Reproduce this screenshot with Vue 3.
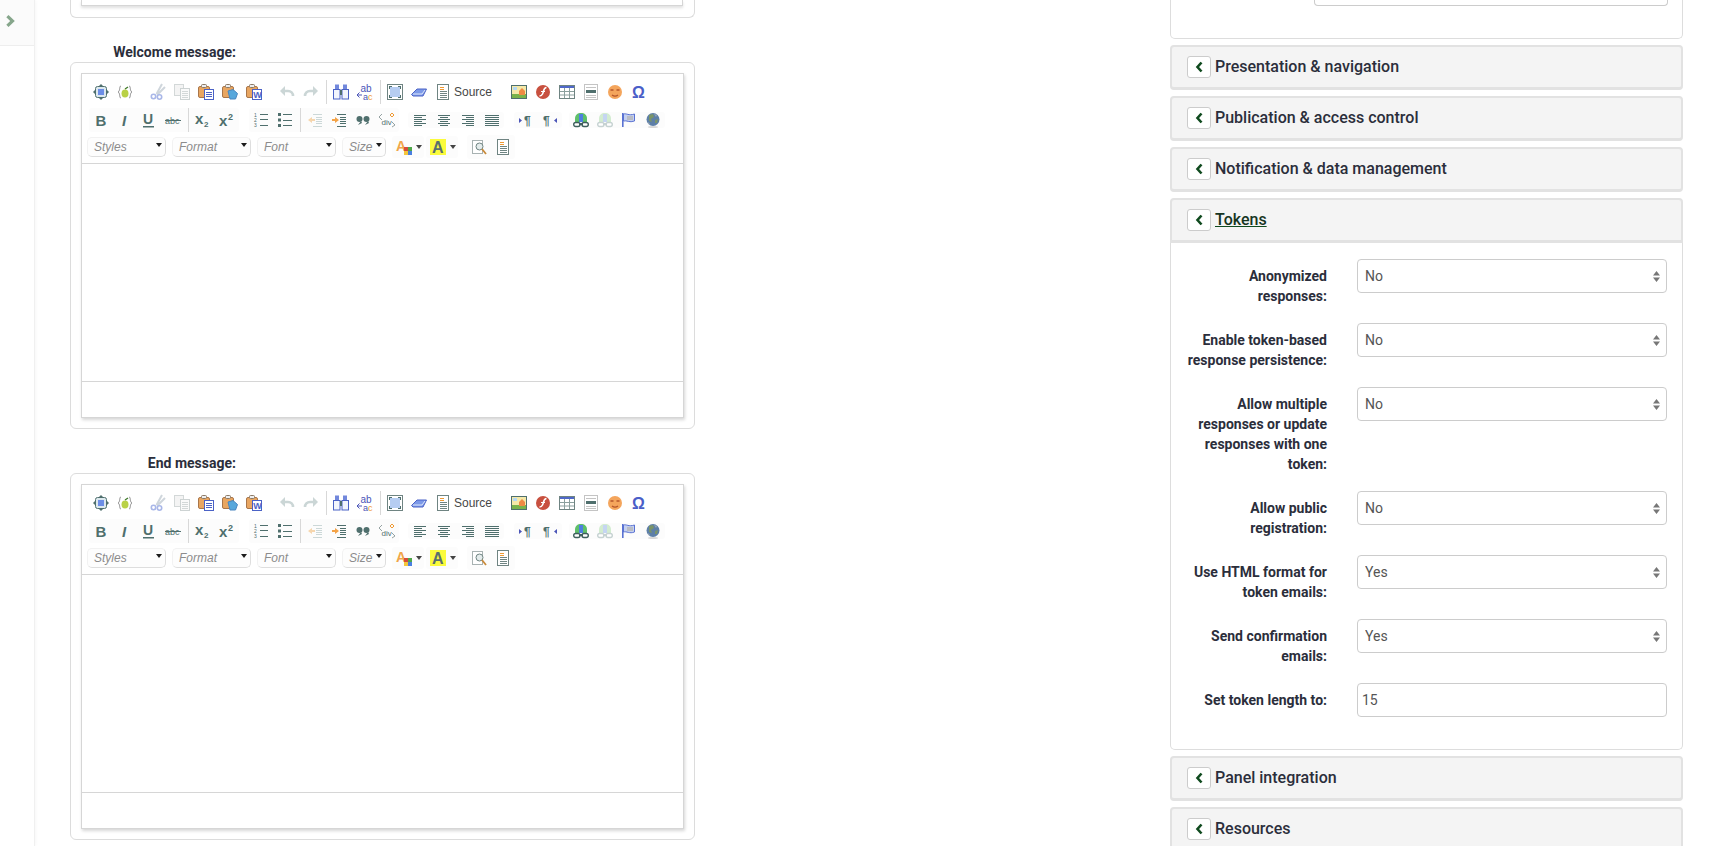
<template>
  <div class="page">
    <!-- SIDE BAR -->
    <aside class="sidebar">
      <div class="side-top">
        <svg class="side-arrow" viewBox="0 0 9 12"><path d="M2.500 0 8.800 6 2.500 12 0.300 9.800 4.200 6 0.300 2.200z" fill="#86a68b" /></svg>
      </div>
    </aside>

    <!-- LEFT COLUMN : EDITORS -->
    <main class="left-col">
      <div class="stub-card"><div class="stub-inner"></div></div>

      <section v-for="msg in messages" :key="msg">
        <label class="msg-label">{{ msg }}</label>
        <div class="editor-card">
          <div class="editor">
            <div class="toolbar">
              <div class="tb-row row-one">
                <div v-for="(group, g) in rowOne" :key="g" class="tb-group">
                  <template v-for="(item, n) in group" :key="n">
                    <span v-if="item === '|'" class="tb-sep"></span>
                    <span v-else-if="item === 'Source'" class="tb-source">Source</span>
                    <svg v-else class="tb-icon" viewBox="0 0 16 16" v-html="icons[item]"></svg>
                  </template>
                </div>
              </div>
              <div class="tb-row row-two">
                <div v-for="(group, g) in rowTwo" :key="g" class="tb-group shaded">
                  <template v-for="(item, n) in group" :key="n">
                    <span v-if="item === '|'" class="tb-sep"></span>
                    <svg v-else class="tb-icon" viewBox="0 0 16 16" v-html="icons[item]"></svg>
                  </template>
                </div>
              </div>
              <div class="tb-row row-three">
                <div v-for="c in combos" :key="c" class="combo" :class="{ short: c === 'Size' }">
                  <span>{{ c }}</span><i class="caret"></i>
                </div>
                <div class="color-btn shaded">
                  <svg class="tb-icon" viewBox="0 0 16 16" v-html="icons.textColor"></svg><i class="caret"></i>
                </div>
                <div class="color-btn shaded">
                  <svg class="tb-icon" viewBox="0 0 16 16" v-html="icons.bgColor"></svg><i class="caret"></i>
                </div>
                <div class="tb-group shaded tail">
                  <svg class="tb-icon" viewBox="0 0 16 16" v-html="icons.inspect"></svg>
                  <svg class="tb-icon" viewBox="0 0 16 16" v-html="icons.doc"></svg>
                </div>
              </div>
            </div>
            <div class="edit-area"></div>
            <div class="edit-foot"></div>
          </div>
        </div>
      </section>
    </main>

    <!-- RIGHT COLUMN : SETTINGS -->
    <div class="right-col">
      <div class="stub-panel"><div class="stub-input"></div></div>

      <div v-for="p in panels" :key="p" class="panel">
        <div class="panel-head" :class="{ open: p === 'Tokens' }">
          <span class="back-btn">
            <svg viewBox="0 0 8 12" width="8" height="12"><path d="M6.500 1.500 2.500 6l4 4.500" fill="none" stroke="#0f4a1e" stroke-width="2.600" /></svg>
          </span>
          <span class="panel-title">{{ p }}</span>
        </div>
        <div v-if="p === 'Tokens'" class="panel-body">
          <div v-for="f in fields" :key="f.label" class="field">
            <label class="field-label">{{ f.label }}</label>
            <div class="control">
              <input v-if="f.input" class="text-input" type="text" :value="f.value" />
              <template v-else>
                <select class="select"><option>{{ f.value }}</option></select>
                <svg class="updown" viewBox="0 0 7 11" width="7" height="11"><path d="M3.500 0 7 4.500H0zM3.500 11 0 6.500h7z" fill="#777" /></svg>
              </template>
            </div>
          </div>
        </div>
      </div>
    </div>
  </div>
</template>

<script setup>
const messages = ['Welcome message:', 'End message:']

const rowOne = [
  ['preview', 'template'],
  ['cut', 'copy', 'paste', 'pasteText', 'pasteWord'],
  ['undo', 'redo', '|', 'find', 'replace', '|', 'maximize', 'eraser', 'doc', 'Source'],
  ['image', 'flash', 'table', 'rule', 'smiley', 'omega']
]
const rowTwo = [
  ['bold', 'italic', 'underline', 'strike', '|', 'sub', 'sup'],
  ['ol', 'ul', '|', 'outdent', 'indent', 'quote', 'div'],
  ['left', 'center', 'right', 'justify'],
  ['ltr', 'rtl'],
  ['link', 'unlink', 'anchor', 'globe']
]
const combos = ['Styles', 'Format', 'Font', 'Size']

/* PANELS */
const panels = ['Presentation & navigation', 'Publication & access control', 'Notification & data management', 'Tokens', 'Panel integration', 'Resources']
const fields = [
  { label: 'Anonymized responses:', value: 'No' },
  { label: 'Enable token-based response persistence:', value: 'No' },
  { label: 'Allow multiple responses or update responses with one token:', value: 'No' },
  { label: 'Allow public registration:', value: 'No' },
  { label: 'Use HTML format for token emails:', value: 'Yes' },
  { label: 'Send confirmation emails:', value: 'Yes' },
  { label: 'Set token length to:', value: '15', input: true }
]

/* ICONS */
const TEAL = '#4f6f6d'
const lines = (rows, color = TEAL) =>
  rows.map(([x, y, w]) => `<rect x="${x}" y="${y}" width="${w}" height="1" fill="${color}"/>`).join('')
const label = (txt, x, y, size, fill, extra = '') =>
  `<text x="${x}" y="${y}" font-family="Liberation Sans, sans-serif" font-size="${size}" fill="${fill}" ${extra}>${txt}</text>`
const clipboard = inner =>
  `<rect x="0.500" y="2.500" width="11" height="11" rx="1.500" fill="#e9a661" stroke="#a9764a"/><rect x="3.500" y="0.500" width="5" height="3" rx="1" fill="#eee" stroke="#8c7a66"/>${inner}`
const car = (dome, glass, wheel) =>
  `<path d="M2 10V6.500C2 3 4.500 1 8 1s6 2 6 5.500V10z" fill="${dome}"/><path d="M6 2h4v8H6z" fill="${glass}"/><rect x="0.700" y="10.500" width="6.300" height="4" rx="2" fill="#fff" stroke="${wheel}" stroke-width="1.400"/><rect x="9" y="10.500" width="6.300" height="4" rx="2" fill="#fff" stroke="${wheel}" stroke-width="1.400"/><rect x="6" y="11" width="4" height="2" fill="${wheel}"/>`

const icons = {
  preview: `<rect x="2.500" y="2.500" width="11" height="11" rx="2" fill="#dce8ee" stroke="${TEAL}"/><rect x="5" y="5" width="6" height="6" fill="#6d8ee6"/><path d="M8 0l2 2H6zM8 16l2-2H6zM0 8l2-2v4zM16 8l-2-2v4z" fill="${TEAL}"/>`,
  template: `<path d="M4 2C2 2 3.500 7 1 8c2.500 1 1 6 3 6M12 2c2 0 .5 5 3 6-2.500 1-1 6-3 6" stroke="#8a8a8a" fill="none"/><ellipse cx="8" cy="9.500" rx="3.500" ry="4" fill="#b9d146"/><path d="M8 5l3-2" stroke="#3f7a2a" stroke-width="1.300"/>`,
  cut: `<path d="M12 0 6.500 10M15 3 7 11" stroke="#cfd6dc" stroke-width="2"/><circle cx="3.500" cy="12.500" r="2.200" fill="none" stroke="#a9b7e8" stroke-width="1.600"/><circle cx="9.500" cy="13" r="2.200" fill="none" stroke="#a9b7e8" stroke-width="1.600"/>`,
  copy: `<rect x="0.500" y="0.500" width="9" height="11" fill="#f4f4f4" stroke="#d3d8d8"/><rect x="6.500" y="4.500" width="9" height="11" fill="#fafafa" stroke="#cdd3d3"/>${lines([[8, 7, 6], [8, 9, 6], [8, 11, 6], [8, 13, 6]], '#d3d8d8')}`,
  paste: clipboard(`<rect x="6.500" y="5.500" width="9" height="10" fill="#fff" stroke="#4b62c6"/>${lines([[8, 8, 6], [8, 10, 6], [8, 12, 6]], '#4b62c6')}`),
  pasteText: clipboard(`<path d="M6 7l5-1.500 4.500 4-2 5.500H8z" fill="#58a8dc" stroke="#4a86c0"/>`),
  pasteWord: clipboard(`<rect x="6.500" y="5.500" width="9" height="10" fill="#fff" stroke="#4b62c6"/>${label('W', 7.2, 14, 9, '#4b62c6', 'font-weight="700"')}`),
  undo: `<path d="M3 7h6c3 0 5 2 5 5" fill="none" stroke="#cbd6d6" stroke-width="2.600"/><path d="M1 7l5-5v10z" fill="#cbd6d6"/>`,
  redo: `<path d="M13 7H7c-3 0-5 2-5 5" fill="none" stroke="#cbd6d6" stroke-width="2.600"/><path d="M15 7l-5-5v10z" fill="#cbd6d6"/>`,
  find: `<rect x="2" y="0.500" width="4" height="5" fill="#7288dc"/><rect x="10" y="0.500" width="4" height="5" fill="#7288dc"/><rect x="0.500" y="5.500" width="6.500" height="9.500" fill="#f2f5fd" stroke="#4b62c6"/><rect x="9" y="5.500" width="6.500" height="9.500" fill="#f2f5fd" stroke="#4b62c6"/><rect x="7" y="6" width="2" height="5" fill="${TEAL}"/>`,
  replace: `${label('ab', 3.500, 8, 10, '#4b55b8')}<path d="M0 11h5M2.500 8.500 0 11l2.500 2.500" fill="none" stroke="#4b55b8"/>${label('a', 6, 15.500, 9, '#4b55b8')}${label('c', 11, 15.500, 9, '#ef9a34')}`,
  maximize: `<rect x="0.500" y="0.500" width="15" height="15" fill="#fff" stroke="#6f8482"/><rect x="3" y="3" width="10" height="10" fill="#b6cdf2"/><path d="M2 2h3v1H3v2H2zM14 2v3h-1V3h-2V2zM2 14v-3h1v2h2v1zM14 14h-3v-1h2v-2h1z" fill="${TEAL}"/>`,
  eraser: `<path d="M0.500 10.500 6 5h9.500L12 12H2z" fill="#7d9ae8" stroke="#4b62c6"/><path d="M2 10h9l3-4" fill="none" stroke="#dfe7fa"/>`,
  doc: `<rect x="2.500" y="0.500" width="11" height="15" fill="#fff" stroke="#6f8482"/>${lines([[5, 3, 4], [5, 5, 4]], '#ef9a34')}${lines([[5, 7, 7], [5, 9, 7], [5, 11, 7], [5, 13, 7]], '#6f8482')}`,
  image: `<rect x="0.500" y="1.500" width="15" height="13" fill="#f5e9a8" stroke="${TEAL}"/><rect x="1" y="10" width="14" height="4" fill="#79b34a"/><path d="M8 7l3-3 3 3v4H8z" fill="#ef8a44"/><rect x="2" y="3" width="4" height="3" fill="#b4d8f2"/>`,
  flash: `<circle cx="8" cy="8" r="7" fill="#c8503f"/><path d="M11.500 3.500C8.500 3.500 9 7 7.500 10c-.6 1.300-1.500 2-3 2" fill="none" stroke="#fff" stroke-width="1.600"/><path d="M6 7.500h4" stroke="#fff"/>`,
  table: `<rect x="0.500" y="1.500" width="15" height="13" fill="#fff" stroke="#6f8482"/><rect x="1" y="2" width="14" height="2" fill="#4f68c8"/><path d="M1 7.500h14M1 11h14M5.500 4v10M10.500 4v10" stroke="#8ba09e"/>`,
  rule: `<rect x="1.500" y="0.500" width="13" height="15" fill="#fff" stroke="#c4c4c4"/><rect x="3" y="6" width="10" height="3" fill="${TEAL}"/>${lines([[3, 3, 10], [3, 11, 10], [3, 13, 10]], '#c4c4c4')}`,
  smiley: `<circle cx="8" cy="8" r="7" fill="#f4a55c"/><path d="M3.500 6h3M9.500 6h3" stroke="#b5562a" stroke-width="1.300"/><path d="M5 11c2 1.600 4 1.600 6 0" fill="none" stroke="#b5562a" stroke-width="1.300"/>`,
  omega: label('Ω', 1, 14, 16, '#4a5ec8', 'font-weight="700"'),
  bold: label('B', 2.500, 14, 15, TEAL, 'font-weight="700"'),
  italic: label('I', 5, 14, 15, TEAL, 'font-weight="700" font-style="italic"'),
  underline: `${label('U', 2, 12, 14, TEAL, 'font-weight="700"')}<rect x="2" y="14" width="11" height="1.500" fill="${TEAL}"/>`,
  strike: `${label('abc', 0, 12, 9, TEAL)}<rect x="0" y="8" width="16" height="1" fill="${TEAL}"/>`,
  sub: `${label('x', 0, 12, 15, TEAL, 'font-weight="700"')}${label('2', 9, 15, 8, TEAL, 'font-weight="700"')}`,
  sup: `${label('x', 0, 14, 15, TEAL, 'font-weight="700"')}${label('2', 9, 8, 9, TEAL, 'font-weight="700"')}`,
  ol: `${label('1', 1, 5, 5, TEAL)}${label('2', 1, 10, 5, TEAL)}${label('3', 1, 15, 5, TEAL)}${lines([[7, 2, 8], [7, 7, 8], [7, 13, 8]])}`,
  ul: `<rect x="1" y="1" width="3" height="3" fill="${TEAL}"/><rect x="1" y="6.500" width="3" height="3" fill="${TEAL}"/><rect x="1" y="12" width="3" height="3" fill="${TEAL}"/>${lines([[6, 2, 9], [6, 8, 9], [6, 13, 9]])}`,
  outdent: `<path d="M1 8l4-3v2h3v2H5v2z" fill="#f6d6ae"/>${lines([[6, 2, 9], [9, 5, 6], [9, 7, 6], [9, 9, 6], [9, 11, 6], [6, 14, 9]], '#ccd8d8')}`,
  indent: `<path d="M8 8 4 5v2H1v2h3v2z" fill="#f4a347"/>${lines([[6, 2, 9], [9, 5, 6], [9, 7, 6], [9, 9, 6], [9, 11, 6], [6, 14, 9]])}`,
  quote: `<circle cx="4.500" cy="7" r="3" fill="${TEAL}"/><circle cx="11.500" cy="7" r="3" fill="${TEAL}"/><path d="M6 9l-3 4 4-2zM13 9l-3 4 4-2z" fill="${TEAL}"/>`,
  div: `<path d="M3 2 0 5l3 3M13 10l3 3-3 2" fill="none" stroke="#7a8a8a" stroke-width=".8"/>${label('div', 2.500, 13, 8, TEAL)}<path d="M13 1l2 2-2 2-2-2z" fill="none" stroke="#ef9a34"/>`,
  left: lines([[2, 3, 12], [2, 5, 8], [2, 7, 12], [2, 9, 8], [2, 11, 12], [2, 13, 8]]),
  center: lines([[2, 3, 12], [4, 5, 8], [2, 7, 12], [4, 9, 8], [2, 11, 12], [4, 13, 8]]),
  right: lines([[2, 3, 12], [6, 5, 8], [2, 7, 12], [6, 9, 8], [2, 11, 12], [6, 13, 8]]),
  justify: lines([[1, 3, 14], [1, 5, 14], [1, 7, 14], [1, 9, 14], [1, 11, 14], [1, 13, 14]]),
  ltr: `<path d="M1 6l3 2.500L1 11z" fill="#4b55b8"/>${label('¶', 6, 13, 12, TEAL, 'font-weight="700"')}`,
  rtl: `${label('¶', 1, 13, 12, TEAL, 'font-weight="700"')}<path d="M15 6l-3 2.500 3 2.500z" fill="#4b55b8"/>`,
  link: car('#5fc06a', '#4f7fe0', '#3f5f5d'),
  unlink: car('#d3ecd0', '#c5d5f2', '#c6d2d2'),
  anchor: `<rect x="1" y="1" width="1.600" height="14" fill="#5a72d2"/><path d="M2.500 2c3-1 5 2 11 0v7c-5 2-8-1-11 0z" fill="#c4d0f0" stroke="#5a72d2"/><rect x="6" y="4" width="6" height="4" fill="#b9bcc4"/>`,
  globe: `<circle cx="8" cy="7.500" r="6.500" fill="#5d7fa8"/><path d="M4 3l4-1 1 3-3 2 1 3-3-1zM10 8l3-1-1 4-2 0z" fill="#7a9468"/><path d="M9 2l3 1-1 2zM3 10l2 2-2 0z" fill="#9aa8b4"/><ellipse cx="8" cy="15" rx="5" ry="1" fill="#d8d8d8"/>`,
  textColor: `${label('A', 0, 12, 14, '#f0a64a', 'font-weight="700"')}<rect x="8" y="8" width="4" height="4" fill="#d84a3a"/><rect x="12" y="8" width="4" height="4" fill="#4fa84a"/><rect x="8" y="12" width="4" height="4" fill="#f4c63c"/><rect x="12" y="12" width="4" height="4" fill="#4a7fe0"/>`,
  bgColor: `<rect x="0" y="0" width="16" height="16" fill="#fbfb3c"/>${label('A', 2, 14, 16, '#5a6f6f', 'font-weight="700"')}`,
  inspect: `<rect x="1.500" y="1.500" width="10" height="13" fill="#fff" stroke="#a8b2b2"/><circle cx="8.500" cy="7.500" r="3.500" fill="#e4ecec" stroke="#6f8482"/><path d="M11 10l4 5" stroke="#c88a3a" stroke-width="1.800"/>`
}
</script>

<style>
body {
  background: #fff;
}
</style>

<style scoped>
.page {
  display: flex;
  width: 1711px;
  height: 846px;
  overflow: hidden;
  background: #fff;
  font-family: Roboto, "Liberation Sans", sans-serif;
  color: #2b2e3b;
}

/* SIDE BAR */
.sidebar {
  width: 34px;
  flex: none;
  border-right: 1px solid #f0f0f0;
  box-shadow: 1px 0 3px rgba(0, 0, 0, 0.03);
}
.side-top {
  height: 46px;
  padding: 15px 0 0 6px;
  box-sizing: border-box;
  background: #fbfbfb;
  border-bottom: 1px solid #eeeeee;
}
.side-arrow {
  display: block;
  width: 9px;
  height: 12px;
}

/* LEFT COLUMN */
.left-col {
  width: 625px;
  flex: none;
  margin-left: 35px;
}
.stub-card {
  height: 18px;
  box-sizing: border-box;
  padding: 0 10px;
  border: 1px solid #dcdcdc;
  border-top: none;
  border-radius: 0 0 6px 6px;
}
.stub-inner {
  height: 6px;
  box-sizing: border-box;
  border: 1px solid #d6d6d6;
  border-top: none;
  box-shadow: 0 2px 3px rgba(0, 0, 0, 0.12);
  margin-right: 1px;
}
.msg-label {
  display: block;
  width: 166px;
  margin-top: 24px;
  text-align: right;
  font-size: 14px;
  line-height: 20px;
  font-weight: 700;
}
.editor-card {
  height: 367px;
  box-sizing: border-box;
  padding: 10px;
  border: 1px solid #dcdcdc;
  border-radius: 6px;
}
.editor {
  height: 345px;
  box-sizing: border-box;
  border: 1px solid #d6d6d6;
  box-shadow: 1px 2px 3px rgba(0, 0, 0, 0.16);
  display: flex;
  flex-direction: column;
}

/* TOOLBAR */
.toolbar {
  height: 90px;
  flex: none;
  padding-top: 6px;
  box-sizing: border-box;
  border-bottom: 1px solid #d6d6d6;
}
.tb-row {
  display: flex;
  align-items: center;
}
.row-one {
  height: 24px;
  padding-left: 7px;
}
.row-one .tb-group {
  margin-right: 9px;
}
.row-one .tb-group:nth-child(3) {
  margin-right: 14px;
}
.row-two {
  height: 24px;
  margin-top: 4px;
  padding-left: 7px;
}
.row-two .tb-group {
  margin-right: 10px;
}
.row-two .tb-group:nth-child(2) {
  margin-right: 9px;
}
.row-two .tb-group:nth-child(4) {
  margin-right: 7px;
}
.row-three {
  height: 20px;
  margin-top: 5px;
  padding-left: 5px;
}
.tb-group {
  display: flex;
  align-items: center;
}
.shaded {
  background: #fcfcfc;
  border-radius: 3px;
}
.tb-icon {
  display: block;
  width: 16px;
  height: 16px;
  flex: none;
  padding: 0 4px;
  box-sizing: content-box;
  overflow: visible;
}
.tb-sep {
  width: 6px;
  height: 24px;
  flex: none;
  background: linear-gradient(#d8d8d8, #d8d8d8) center / 1px 100% no-repeat;
}
.tb-source {
  width: 39px;
  margin-left: -1px;
  font: 12px/24px "Liberation Sans", Arial, sans-serif;
  color: #474747;
}
.combo {
  width: 79px;
  height: 20px;
  flex: none;
  margin-right: 6px;
  padding-left: 6px;
  box-sizing: border-box;
  position: relative;
  background: #fdfdfd;
  border: 1px solid #f2f2f2;
  border-right-color: #dedede;
  border-bottom-color: #dedede;
  border-radius: 5px;
  font: italic 12px/18px "Liberation Sans", Arial, sans-serif;
  color: #8c8c8c;
}
.combo.short {
  width: 44px;
}
.caret {
  display: block;
  width: 0;
  height: 0;
  border-left: 3.500px solid transparent;
  border-right: 3.500px solid transparent;
  border-top: 4px solid #1c1c1c;
}
.combo .caret {
  position: absolute;
  top: 5px;
  right: 3px;
}
.color-btn {
  display: flex;
  align-items: center;
  height: 22px;
  padding-right: 2px;
}
.color-btn + .color-btn {
  margin-left: 2px;
}
.color-btn .caret {
  border-top-color: #444;
}
.tail {
  margin-left: 9px;
  height: 24px;
}
.edit-area {
  flex: 1;
  border-bottom: 1px solid #d6d6d6;
}
.edit-foot {
  height: 35px;
  flex: none;
}

/* RIGHT COLUMN */
.right-col {
  width: 513px;
  flex: none;
  margin-left: auto;
  margin-right: 28px;
}
.stub-panel {
  height: 39px;
  box-sizing: border-box;
  border: 1px solid #dddddd;
  border-top: none;
  border-radius: 0 0 5px 5px;
  padding-left: 143px;
}
.stub-input {
  width: 354px;
  height: 6px;
  box-sizing: border-box;
  border: 1px solid #cccccc;
  border-top: none;
  border-radius: 0 0 4px 4px;
}
.panel {
  margin-top: 6px;
}
.panel-head {
  display: flex;
  align-items: center;
  height: 45px;
  padding-left: 15px;
  box-sizing: border-box;
  background: #f4f4f4;
  border: 2px solid #e2e2e2;
  border-bottom-width: 3px;
  border-radius: 4px;
}
.panel-head.open {
  border-radius: 4px 4px 0 0;
}
.back-btn {
  display: flex;
  align-items: center;
  justify-content: center;
  width: 24px;
  height: 22px;
  box-sizing: border-box;
  background: #fff;
  border: 1px solid #cccccc;
  border-radius: 3px;
}
.panel-title {
  margin-left: 4px;
  font-size: 16px;
  line-height: 18px;
  font-weight: 500;
}
.open .panel-title {
  color: #17351f;
  text-decoration: underline;
  text-decoration-color: #0f4a1e;
}
.panel-body {
  padding: 16px 0 32px 11px;
  border: 1px solid #dddddd;
  border-top: none;
  border-radius: 0 0 5px 5px;
}
.field {
  display: flex;
  align-items: flex-start;
  margin-bottom: 17px;
}
.field:last-child {
  margin-bottom: 0;
}
.field-label {
  width: 145px;
  flex: none;
  padding-top: 7px;
  text-align: right;
  font-size: 14px;
  line-height: 20px;
  font-weight: 700;
}
.control {
  position: relative;
  width: 310px;
  height: 34px;
  margin-left: 30px;
}
.select,
.text-input {
  display: block;
  width: 100%;
  height: 34px;
  box-sizing: border-box;
  background: #fff;
  border: 1px solid #cccccc;
  border-radius: 4px;
  font-family: Roboto, "Liberation Sans", sans-serif;
  font-size: 14px;
  color: #555555;
  outline: none;
}
.select {
  appearance: none;
  padding: 0 24px 0 7px;
}
.text-input {
  padding: 0 4px;
}
.updown {
  position: absolute;
  top: 12px;
  right: 7px;
}
</style>
